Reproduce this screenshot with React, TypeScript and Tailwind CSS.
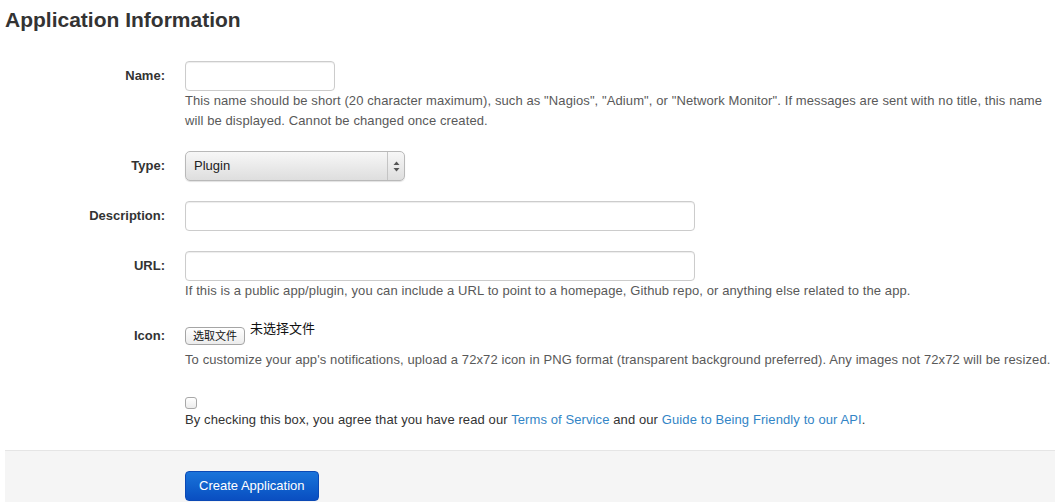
import React from "react";

const font = { fontFamily: '"Liberation Sans", Arial, "Noto Sans CJK SC", sans-serif' };

function Label({ children }: { children?: React.ReactNode }) {
  return (
    <div className="w-[160px] shrink-0 pt-[5px] text-right text-[13px] font-bold leading-[20px] text-[#333]">
      {children}
    </div>
  );
}

function Help({ children }: { children: React.ReactNode }) {
  return <p className="text-[13px] leading-[20px] tracking-[0.1px] text-[#595959]">{children}</p>;
}

function TextInput({ wide }: { wide?: boolean }) {
  return (
    <input
      type="text"
      className={`${wide ? "w-[510px]" : "w-[150px]"} block h-[30px] rounded-[4px] border border-[#ccc] bg-white px-[6px] text-[13px] shadow-[inset_0_1px_1px_rgba(0,0,0,0.075)] outline-none`}
    />
  );
}

function Row({ label, children, className = "" }: { label?: string; children: React.ReactNode; className?: string }) {
  return (
    <div className={`flex gap-[20px] ${className}`}>
      <Label>{label}</Label>
      <div className="min-w-0 flex-1">{children}</div>
    </div>
  );
}

export default function App() {
  return (
    <div className="min-h-[502px] bg-white pl-[5px]" style={font}>
      <div className="w-[1050px]">
        <h2 className="h-[40px] text-[21px] font-bold leading-[40px] text-[#333]">Application Information</h2>

        <form className="mt-[21px]">
          <Row label="Name:" className="mb-[20px]">
            <TextInput />
            <Help>
              This name should be short (20 character maximum), such as "Nagios", "Adium", or "Network Monitor". If
              messages are sent with no title, this name will be displayed. Cannot be changed once created.
            </Help>
          </Row>

          <Row label="Type:" className="mb-[20px]">
            <div className="flex h-[30px] w-[220px] items-stretch overflow-hidden rounded-[5px] border border-[#b9b9b9] bg-gradient-to-b from-[#f7f7f7] to-[#dedede] shadow-[0_1px_1px_rgba(0,0,0,0.12)]">
              <div className="flex flex-1 items-center pl-[8px] text-[13px] text-[#222]">Plugin</div>
              <div className="flex w-[17px] items-center justify-center border-l border-[#c4c4c4]">
                <svg width="7" height="11" viewBox="0 0 7 11">
                  <path d="M3.5 0.5 L6.5 4 L0.5 4 Z" fill="#555" />
                  <path d="M3.5 10.5 L6.5 7 L0.5 7 Z" fill="#555" />
                </svg>
              </div>
            </div>
          </Row>

          <Row label="Description:" className="mb-[20px]">
            <TextInput wide />
          </Row>

          <Row label="URL:" className="mb-[20px]">
            <TextInput wide />
            <Help>
              If this is a public app/plugin, you can include a URL to point to a homepage, Github repo, or anything
              else related to the app.
            </Help>
          </Row>

          <Row label="Icon:" className="mb-[20px]">
            <div className="flex h-[29px] items-start gap-[5px]">
              <button
                type="button"
                className="mt-[6px] h-[18px] w-[60px] rounded-[4px] border border-[#a5a5a5] bg-gradient-to-b from-white to-[#ececec] text-[11px] leading-[16px] text-[#111]"
              >
                选取文件
              </button>
              <span className="text-[13px] leading-[16px] text-[#111]">未选择文件</span>
            </div>
            <Help>
              To customize your app's notifications, upload a 72x72 icon in PNG format (transparent background
              preferred). Any images not 72x72 will be resized.
            </Help>
          </Row>

          <Row>
            <div className="mt-[7px] mb-[1px] h-[12px] w-[12px] rounded-[3px] border border-[#a8a8a8] bg-gradient-to-b from-white to-[#ececec]" />
            <p className="text-[13px] leading-[20px] tracking-[0.1px] text-[#333]">
              By checking this box, you agree that you have read our{" "}
              <a className="text-[#3385c6]">Terms of Service</a> and our{" "}
              <a className="text-[#3385c6]">Guide to Being Friendly to our API</a>.
            </p>
          </Row>

          <div className="mt-[20px] h-[60px] border-t border-[#e5e5e5] bg-[#f5f5f5] pt-[20px] pl-[180px]">
            <button
              type="button"
              className="h-[30px] rounded-[4px] border border-[#0b49b5] bg-gradient-to-b from-[#1a74da] to-[#0a4ec1] px-[13px] text-[13px] leading-[20px] text-white"
            >
              Create Application
            </button>
          </div>
        </form>
      </div>
    </div>
  );
}
